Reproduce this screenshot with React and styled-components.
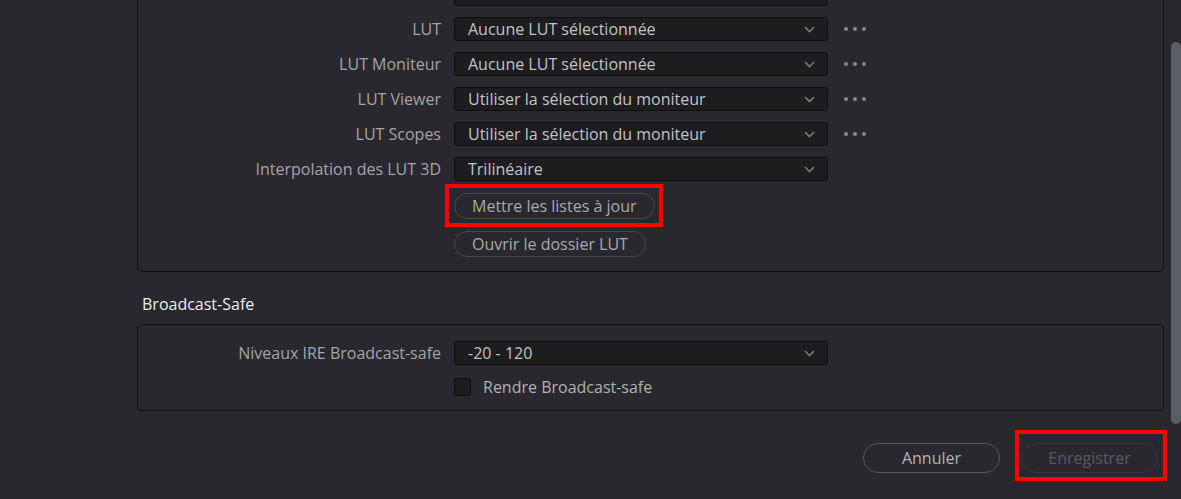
import React from 'react';
import styled, { createGlobalStyle, css } from 'styled-components';

const lutRows = [
  { label: '', value: '', hidden: true },
  { label: 'LUT', value: 'Aucune LUT sélectionnée', more: true },
  { label: 'LUT Moniteur', value: 'Aucune LUT sélectionnée', more: true },
  { label: 'LUT Viewer', value: 'Utiliser la sélection du moniteur', more: true },
  { label: 'LUT Scopes', value: 'Utiliser la sélection du moniteur', more: true },
  { label: 'Interpolation des LUT 3D', value: 'Trilinéaire' },
];

const App = () => {
  return (
    <>
      <GlobalStyle />
      <Page>
        <Content>
          <GroupBox $scrolled>
            {lutRows.map((row, i) => (
              <FieldRow key={i}>
                <Label>{row.label}</Label>
                <Select value={row.value} />
                {row.more && <MoreDots />}
              </FieldRow>
            ))}
            <ActionStack>
              <PillButton $mark="update">Mettre les listes à jour</PillButton>
              <PillButton>Ouvrir le dossier LUT</PillButton>
            </ActionStack>
          </GroupBox>

          <SectionTitle>Broadcast-Safe</SectionTitle>
          <GroupBox>
            <FieldRow>
              <Label>Niveaux IRE Broadcast-safe</Label>
              <Select value="-20 - 120" />
            </FieldRow>
            <FieldRow $short>
              <Label />
              <CheckLine>
                <CheckBox />
                <CheckText>Rendre Broadcast-safe</CheckText>
              </CheckLine>
            </FieldRow>
          </GroupBox>

          <Footer>
            <DialogButton>Annuler</DialogButton>
            <DialogButton disabled $mark="save">Enregistrer</DialogButton>
          </Footer>
        </Content>
        <ScrollTrack>
          <ScrollThumb />
        </ScrollTrack>
      </Page>
    </>
  );
};

const Select = ({ value }) => (
  <SelectBox>
    <span>{value}</span>
    <svg width="11" height="7" viewBox="0 0 11 7">
      <path d="M1 1l4.5 4.5L10 1" fill="none" stroke="#7b7b80" strokeWidth="1.6" />
    </svg>
  </SelectBox>
);

const MoreDots = () => (
  <Dots>
    <svg width="24" height="6" viewBox="0 0 24 6">
      <circle cx="3" cy="3" r="2" fill="#88888d" />
      <circle cx="12" cy="3" r="2" fill="#88888d" />
      <circle cx="21" cy="3" r="2" fill="#88888d" />
    </svg>
  </Dots>
);

// Styled components
const GlobalStyle = createGlobalStyle`
  html, body {
    margin: 0;
    padding: 0;
    background: #28282e;
  }
  body {
    font-family: "Open Sans", "Noto Sans", sans-serif;
    -webkit-font-smoothing: antialiased;
  }
`;

const Page = styled.div`
  display: flex;
  width: 1181px;
  height: 499px;
  overflow: hidden;
  background: #28282e;
`;

const Content = styled.div`
  flex: 0 0 1164px;
  box-sizing: border-box;
  padding-left: 137px;
  display: flex;
  flex-direction: column;
`;

const GroupBox = styled.div`
  border: 1px solid #111113;
  border-radius: 4px;
  display: flex;
  flex-direction: column;
  gap: 11px;
  padding: 16px 0 16px;
  ${(p) =>
    p.$scrolled &&
    css`
      margin-top: -31px;
      padding: 12px 0 14px;
    `}
`;

const FieldRow = styled.div`
  display: grid;
  grid-template-columns: 303px 374px auto;
  column-gap: 13px;
  align-items: center;
  height: ${(p) => (p.$short ? '18px' : '24px')};
`;

const Label = styled.div`
  text-align: right;
  font-size: 16px;
  color: #a4a4a8;
  white-space: nowrap;
`;

const SelectBox = styled.div`
  height: 24px;
  box-sizing: border-box;
  background: #1d1d20;
  border: 1px solid #0d0d0e;
  border-radius: 3px;
  display: flex;
  align-items: center;
  justify-content: space-between;
  padding: 0 12px 0 13px;
  font-size: 16px;
  color: #c2c2c6;
  white-space: nowrap;
`;

const Dots = styled.div`
  display: flex;
  align-items: center;
  margin-left: 2px;
`;

const ActionStack = styled.div`
  display: flex;
  flex-direction: column;
  align-items: flex-start;
  gap: 12px;
  margin-top: 1px;
  padding-left: 316px;
`;

const markStyles = {
  update: css`
    top: -10px;
    left: -10px;
    right: -9px;
    bottom: -9px;
  `,
  save: css`
    top: -14px;
    left: -7px;
    right: -10px;
    bottom: -9px;
  `,
};

const PillButton = styled.button`
  position: relative;
  height: 26px;
  box-sizing: border-box;
  padding: 0 17px;
  border: 1px solid #4a4a51;
  border-radius: 13px;
  background: transparent;
  font-family: inherit;
  font-size: 16px;
  color: #a9a9ad;
  white-space: nowrap;
  ${(p) =>
    p.$mark &&
    css`
      &::after {
        content: '';
        position: absolute;
        box-sizing: border-box;
        border: 4px solid #ff0000;
        ${markStyles[p.$mark]}
      }
    `}
`;

const SectionTitle = styled.div`
  margin: 21px 0 9px;
  padding-left: 5px;
  font-size: 16px;
  line-height: 22px;
  color: #ededf0;
`;

const CheckLine = styled.div`
  display: flex;
  align-items: center;
  gap: 12px;
`;

const CheckBox = styled.div`
  width: 17px;
  height: 18px;
  box-sizing: border-box;
  background: #1d1d20;
  border: 1px solid #0d0d0e;
  border-radius: 2px;
`;

const CheckText = styled.span`
  font-size: 16px;
  color: #b2b2b6;
  white-space: nowrap;
`;

const Footer = styled.div`
  display: flex;
  justify-content: flex-end;
  gap: 21px;
  margin-top: 32px;
  padding-right: 6px;
`;

const DialogButton = styled.button`
  position: relative;
  width: 137px;
  height: 30px;
  box-sizing: border-box;
  border: 1px solid ${(p) => (p.disabled ? '#34343a' : '#56565d')};
  border-radius: 15px;
  background: transparent;
  font-family: inherit;
  font-size: 16px;
  color: ${(p) => (p.disabled ? '#5a5a60' : '#b4b4b8')};
  ${(p) =>
    p.$mark &&
    css`
      &::after {
        content: '';
        position: absolute;
        box-sizing: border-box;
        border: 4px solid #ff0000;
        ${markStyles[p.$mark]}
      }
    `}
`;

const ScrollTrack = styled.div`
  flex: 0 0 10px;
  margin-left: 7px;
  padding-top: 42px;
`;

const ScrollThumb = styled.div`
  height: 382px;
  background: #5b5e64;
  border-radius: 5px;
`;

export default App;
